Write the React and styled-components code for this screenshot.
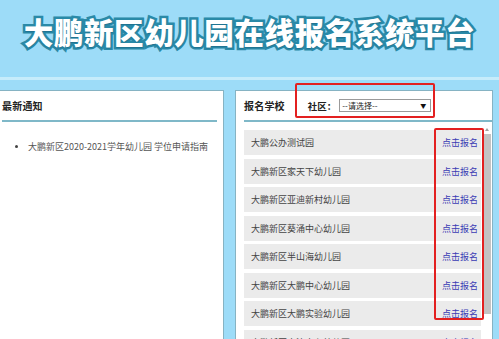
import React from 'react';
import styled, { createGlobalStyle } from 'styled-components';

const GlobalStyle = createGlobalStyle`
  html, body { margin: 0; padding: 0; }
  body {
    font-family: "Microsoft YaHei", "Noto Sans CJK SC", "Liberation Sans", sans-serif;
    background: #9ddcf8;
  }
`;

const Page = styled.div`
  position: relative;
  width: 499px;
  height: 339px;
  overflow: hidden;
  background: #9ddcf8;
  display: flex;
  flex-direction: column;
`;

const Header = styled.header`
  flex-shrink: 0;
  height: 77px;
  display: flex;
  align-items: flex-start;
  justify-content: center;
  padding-top: 12px;
  box-sizing: border-box;
`;

const Title = styled.h1`
  margin: 0;
  font-family: "Noto Sans CJK SC", sans-serif;
  font-weight: 900;
  font-size: 29.5px;
  line-height: 38px;
  letter-spacing: 0.6px;
  color: #ffffff;
  -webkit-text-stroke: 5px #2a8aa8;
  paint-order: stroke fill;
  text-shadow: 0 1px 1px rgba(20, 90, 120, 0.5);
`;

const Stripe = styled.div`
  flex-shrink: 0;
  height: 3px;
  background: #c6ecfb;
`;

const Main = styled.main`
  flex: 1;
  min-height: 0;
  display: flex;
  align-items: stretch;
  gap: 11px;
  padding-top: 10px;
`;

const Panel = styled.section`
  background: #ffffff;
  box-sizing: border-box;
  border: 1px solid #86b3c3;
  border-bottom: none;
  width: ${(p) => p.$width}px;
  padding: ${(p) => p.$pad};
  overflow: hidden;
  ${(p) => p.$noLeft && 'border-left: none;'}
`;

const PanelHead = styled.div`
  height: 29px;
  display: flex;
  align-items: center;
  border-bottom: 2px solid #7fb8c8;
  margin-right: ${(p) => p.$mr || 0}px;
`;

const HeadText = styled.h2`
  margin: 0;
  font-size: 10px;
  font-weight: bold;
  color: #222;
  letter-spacing: 0.2px;
`;

const NoticeList = styled.ul`
  margin: 18px 0 0;
  padding-left: 26px;
  font-size: 9px;
  color: #555;
  li { line-height: 14px; }
  li::marker { color: #444; font-size: 8px; }
`;

const FilterLabel = styled.label`
  margin-left: 23px;
  font-size: 9.5px;
  font-weight: bold;
  color: #222;
  display: flex;
  align-items: center;
`;

const Select = styled.div`
  margin-left: 3px;
  width: 92px;
  height: 13px;
  border: 1px solid #9a9a9a;
  box-sizing: border-box;
  display: flex;
  align-items: center;
  justify-content: space-between;
  padding: 0 4px 0 2px;
  font-size: 8px;
  font-weight: normal;
  color: #222;
  background: #fff;
`;

const Arrow = styled.span`
  font-size: 6px;
  color: #111;
`;

const ListArea = styled.div`
  display: flex;
  gap: 2px;
  padding-top: 8px;
`;

const Rows = styled.div`
  width: 237px;
  display: flex;
  flex-direction: column;
  gap: 3.5px;
`;

const Row = styled.div`
  height: 25px;
  flex-shrink: 0;
  background: #ebebeb;
  display: flex;
  align-items: center;
  justify-content: space-between;
  padding: 0 3px 0 7px;
  font-size: 9px;
  color: #444;
`;

const Link = styled.a`
  color: #3a3cb4;
  text-decoration: none;
`;

const Scrollbar = styled.div`
  width: 8px;
  margin-top: -4px;
  display: flex;
  flex-direction: column;
  align-items: center;
`;

const ScrollUp = styled.div`
  width: 0;
  height: 0;
  border-left: 2.5px solid transparent;
  border-right: 2.5px solid transparent;
  border-bottom: 3px solid #a0a0a0;
  margin: 2px 0 3px;
`;

const Thumb = styled.div`
  width: 7px;
  height: 180px;
  background: #c3c3c3;
`;

const Mark = styled.div`
  position: absolute;
  border: 2px solid #e32020;
  border-radius: 2px;
  box-sizing: border-box;
`;

const schools = [
  '大鹏公办测试园',
  '大鹏新区家天下幼儿园',
  '大鹏新区亚迪新村幼儿园',
  '大鹏新区葵涌中心幼儿园',
  '大鹏新区半山海幼儿园',
  '大鹏新区大鹏中心幼儿园',
  '大鹏新区大鹏实验幼儿园',
  '大鹏新区南澳中心幼儿园',
];

export default function App() {
  return (
    <Page>
      <GlobalStyle />
      <Header>
        <Title>大鹏新区幼儿园在线报名系统平台</Title>
      </Header>
      <Stripe />
      <Main>
        <Panel $width={224} $pad="0 0 0 2px" $noLeft>
          <PanelHead $mr={6}>
            <HeadText>最新通知</HeadText>
          </PanelHead>
          <NoticeList>
            <li>大鹏新区2020-2021学年幼儿园 学位申请指南</li>
          </NoticeList>
        </Panel>
        <Panel $width={258} $pad="0 0 0 8px">
          <PanelHead>
            <HeadText>报名学校</HeadText>
            <FilterLabel>
              社区：
              <Select>
                <span>--请选择--</span>
                <Arrow>▼</Arrow>
              </Select>
            </FilterLabel>
          </PanelHead>
          <ListArea>
            <Rows>
              {schools.map((s) => (
                <Row key={s}>
                  <span>{s}</span>
                  <Link href="#">点击报名</Link>
                </Row>
              ))}
            </Rows>
            <Scrollbar>
              <ScrollUp />
              <Thumb />
            </Scrollbar>
          </ListArea>
        </Panel>
      </Main>
      <Mark style={{ left: 295, top: 83, width: 140, height: 35 }} />
      <Mark style={{ left: 434, top: 128, width: 50, height: 192 }} />
    </Page>
  );
}
